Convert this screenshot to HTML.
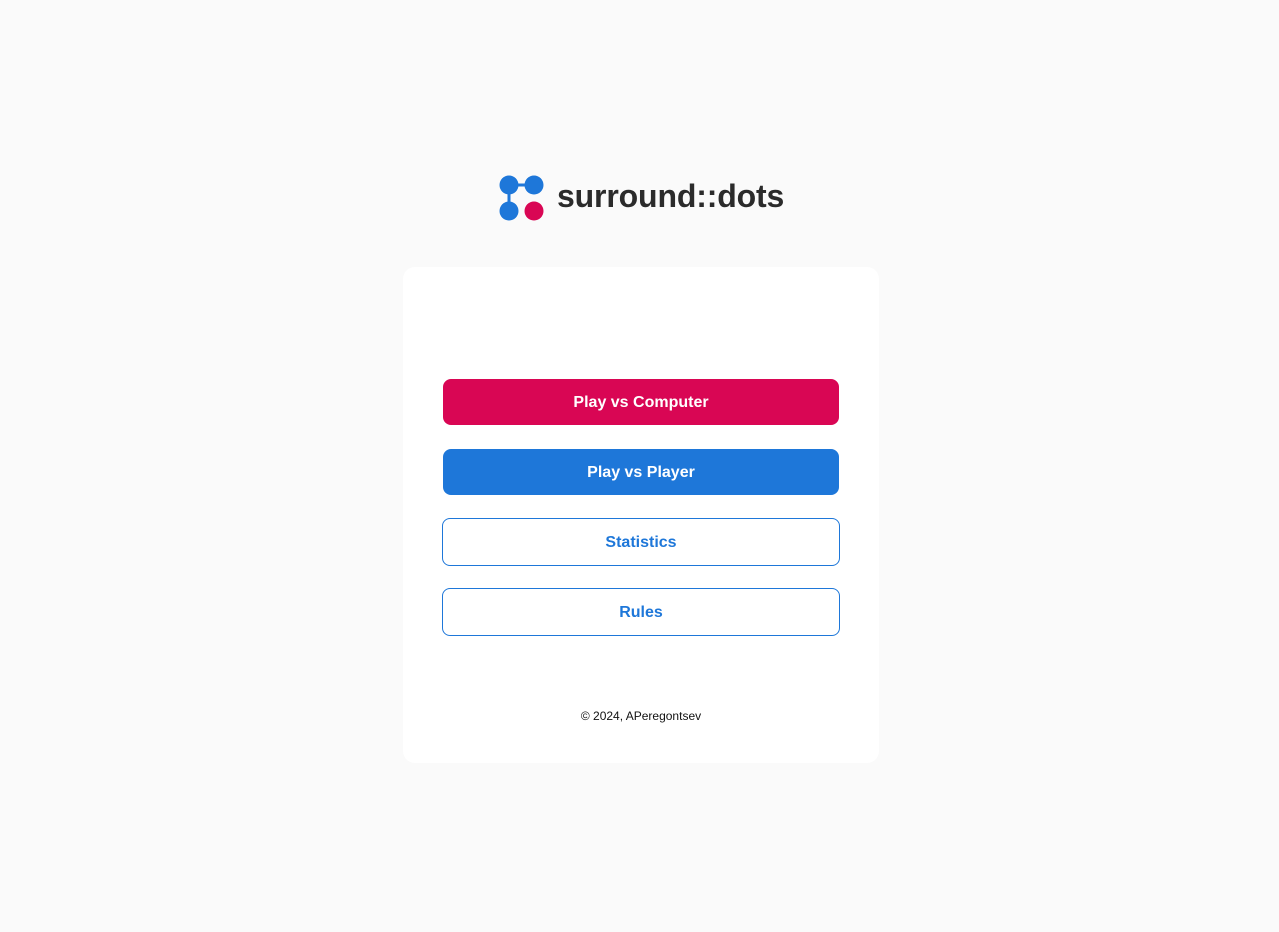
<!DOCTYPE html>
<html><head><style>
body{margin:0;background:#fafafa;width:1279px;height:932px;position:relative;font-family:"Liberation Sans",sans-serif}
.logo{position:absolute;left:499px;top:175px}
.title{position:absolute;left:557px;top:176px;font-size:32px;font-weight:bold;color:#2b2b2b;letter-spacing:-0.15px;line-height:40px}
.card{position:absolute;left:403px;top:267px;width:476px;height:496px;background:#fff;border-radius:12px}
.btn{position:absolute;left:40px;width:396px;height:46px;box-sizing:border-box;border-radius:8px;font-weight:bold;font-size:16px;display:flex;align-items:center;justify-content:center;padding-top:2px}
.r{background:#d90654;color:#fff}
.b{background:#1e77d9;color:#fff}
.o{border:1px solid #1e77d9;color:#1e77d9;background:#fff;left:39px;width:398px;height:48px}
.foot{position:absolute;left:0;right:0;top:442px;text-align:center;font-size:12px;color:#111}
</style></head><body>
<svg class="logo" width="48" height="48" viewBox="0 0 48 48">
<line x1="10" y1="10" x2="35" y2="10" stroke="#1e77d9" stroke-width="3"/>
<line x1="10" y1="10" x2="10" y2="36" stroke="#1e77d9" stroke-width="3"/>
<circle cx="10" cy="10" r="9.5" fill="#1e77d9"/>
<circle cx="35" cy="10" r="9.5" fill="#1e77d9"/>
<circle cx="10" cy="36" r="9.5" fill="#1e77d9"/>
<circle cx="35" cy="36" r="9.5" fill="#d90654"/>
</svg>
<div class="title">surround::dots</div>
<div class="card">
<div class="btn r" style="top:112px">Play vs Computer</div>
<div class="btn b" style="top:182px">Play vs Player</div>
<div class="btn o" style="top:251px">Statistics</div>
<div class="btn o" style="top:321px">Rules</div>
<div class="foot">© 2024, APeregontsev</div>
</div>
</body></html>
